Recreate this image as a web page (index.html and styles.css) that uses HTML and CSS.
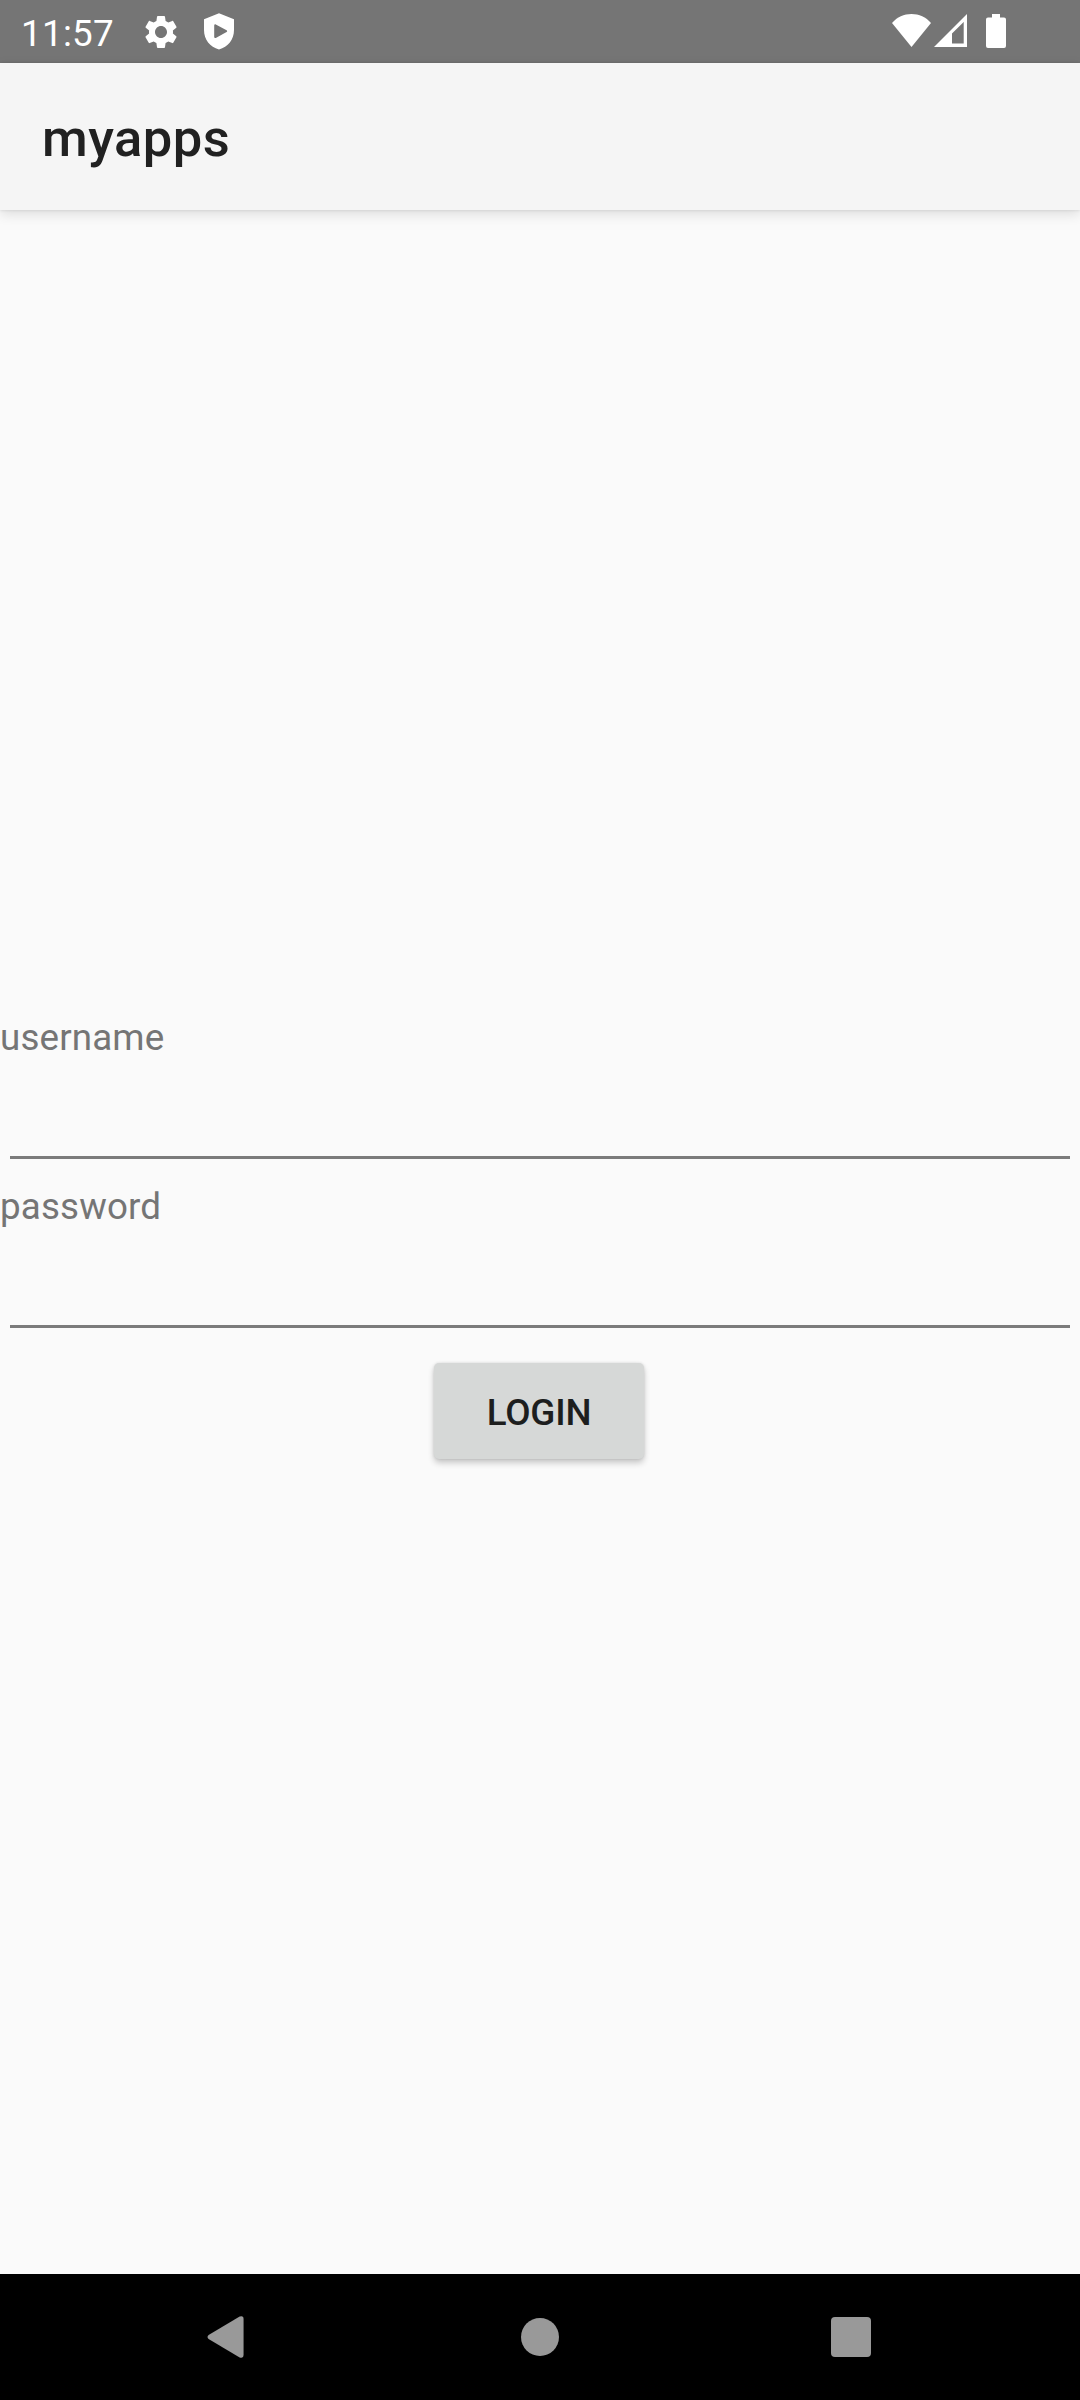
FILE: index.html
```
<!DOCTYPE html>
<html lang="en">
<head>
<meta charset="utf-8">
<title>myapps</title>
<link rel="stylesheet" href="styles.css">
</head>
<body>
<div class="screen">
  <div class="status-bar">
    <span class="clock">11:57</span>
    <svg class="icon-gear" viewBox="0 0 24 24"><path d="M19.14 12.94c.04-.3.06-.61.06-.94 0-.32-.02-.64-.07-.94l2.03-1.58c.18-.14.23-.41.12-.61l-1.92-3.32c-.12-.22-.37-.29-.59-.22l-2.39.96c-.5-.38-1.03-.7-1.62-.94l-.36-2.54c-.04-.24-.24-.41-.48-.41h-3.84c-.24 0-.43.17-.47.41l-.36 2.54c-.59.24-1.13.57-1.62.94l-2.39-.96c-.22-.08-.47 0-.59.22L2.74 8.87c-.12.21-.08.47.12.61l2.03 1.58c-.05.3-.09.63-.09.94s.02.64.07.94l-2.03 1.58c-.18.14-.23.41-.12.61l1.92 3.32c.12.22.37.29.59.22l2.39-.96c.5.38 1.03.7 1.62.94l.36 2.54c.05.24.24.41.48.41h3.84c.24 0 .44-.17.47-.41l.36-2.54c.59-.24 1.13-.56 1.62-.94l2.39.96c.22.08.47 0 .59-.22l1.92-3.32c.12-.22.07-.47-.12-.61l-2.01-1.58zM12 15.6c-1.98 0-3.6-1.62-3.6-3.6s1.62-3.6 3.6-3.6 3.6 1.62 3.6 3.6-1.62 3.6-3.6 3.6z"/></svg>
    <svg class="icon-shield" viewBox="0 0 30 37"><path fill-rule="evenodd" d="M15 .2 30 6.2V17C30 26.500 24 34 15 36.500 6 34 0 26.500 0 17V6.200ZM10.200 12.400V24c0 1 .8 1.300 1.600.9L22.600 19c.8-.5.8-1.200 0-1.700L11.800 11.500c-.8-.4-1.600-.1-1.600.9Z"/></svg>
    <svg class="icon-wifi" viewBox="0 0 39 33"><path d="M19.500 33 0 9C5 3 12 0 19.500 0S34 3 39 9Z"/></svg>
    <svg class="icon-signal" viewBox="0 0 33 33"><path fill-rule="evenodd" d="M0 33 33 0V33ZM18 19.500V29.500H29.700V8Z"/></svg>
    <svg class="icon-battery" viewBox="0 0 20 34"><path d="M6 0h8v3.500h4a2 2 0 0 1 2 2V32a2 2 0 0 1-2 2H2a2 2 0 0 1-2-2V5.500a2 2 0 0 1 2-2h4Z"/></svg>
  </div>
  <header class="app-bar"><h1 class="title">myapps</h1></header>
  <form class="content">
    <label class="label" for="username">username</label>
    <input class="field" id="username" type="text">
    <label class="label" for="password">password</label>
    <input class="field" id="password" type="password">
    <button class="login" type="button">LOGIN</button>
  </form>
  <nav class="nav-bar">
    <svg class="nav-back" viewBox="0 0 37 43"><path d="M1.200 19.500 33 .6Q37-.8 37 3V40Q37 43.800 33 42.400L1.200 23.500Q-1 21.500 1.200 19.500Z"/></svg>
    <span class="nav-home"></span>
    <span class="nav-recent"></span>
  </nav>
</div>
</body>
</html>
```
FILE: styles.css
```
* { box-sizing: border-box; }

body {
  margin: 0;
  font-family: Roboto, "Liberation Sans", sans-serif;
}

.screen {
  display: flex;
  flex-direction: column;
  width: 1080px;
  height: 2400px;
  background: #fafafa;
}

.status-bar {
  display: flex;
  align-items: flex-start;
  height: 63px;
  padding-left: 21px;
  padding-right: 74px;
  background: #757575;
  color: #fff;
}

.status-bar svg { fill: #fff; flex: none; }

.clock {
  width: 120px;
  padding-top: 12px;
  font-size: 36.75px;
  line-height: 43px;
  letter-spacing: .3px;
}

.icon-gear { width: 40px; height: 40px; margin-top: 12px; }
.icon-shield { width: 30px; height: 37px; margin: 13px 0 0 23px; }
.icon-wifi { width: 39px; height: 33px; margin: 14px 0 0 auto; }
.icon-signal { width: 33px; height: 33px; margin: 14px 0 0 3px; }
.icon-battery { width: 20px; height: 34px; margin: 14px 0 0 19px; }

.app-bar {
  display: flex;
  align-items: center;
  height: 147px;
  padding: 3px 0 0 42px;
  background: #f5f5f5;
  box-shadow: 0 4px 12px rgba(0, 0, 0, .12), 0 0 3px rgba(0, 0, 0, .12);
}

.title {
  margin: 0;
  font-size: 52.5px;
  font-weight: 500;
  line-height: 62px;
  letter-spacing: .5px;
  color: #212121;
}

.content {
  display: flex;
  flex: 1;
  flex-direction: column;
  padding-top: 801px;
}

.label {
  height: 50px;
  padding-top: 5px;
  font-size: 36.75px;
  line-height: 43px;
  letter-spacing: .15px;
  color: #757575;
}

.field {
  height: 98px;
  margin: 0 10px 21px;
  padding: 0;
  border: 0;
  border-bottom: 3px solid #7b7b7b;
  outline: 0;
  background: transparent;
  font: 47px Roboto, sans-serif;
}

.login {
  width: 210px;
  height: 96px;
  margin: 14px 2px 0 0;
  align-self: center;
  padding: 2px 0 0;
  border: 0;
  border-radius: 5px;
  background: #d6d8d7;
  box-shadow: 0 4px 6px rgba(0, 0, 0, .2), 0 0 3px rgba(0, 0, 0, .12);
  color: #1d1e1e;
  font: 500 36.75px/43px Roboto, sans-serif;
  letter-spacing: -.2px;
}

.nav-bar {
  display: flex;
  align-items: flex-start;
  height: 126px;
  padding: 42px 0 0 207px;
  background: #000;
}

.nav-back { width: 37px; height: 42px; fill: #999; }

.nav-home {
  width: 38px;
  height: 38px;
  margin: 2px 0 0 277px;
  border-radius: 50%;
  background: #999;
}

.nav-recent {
  width: 40px;
  height: 40px;
  margin: 1px 0 0 272px;
  border-radius: 4px;
  background: #999;
}
```
